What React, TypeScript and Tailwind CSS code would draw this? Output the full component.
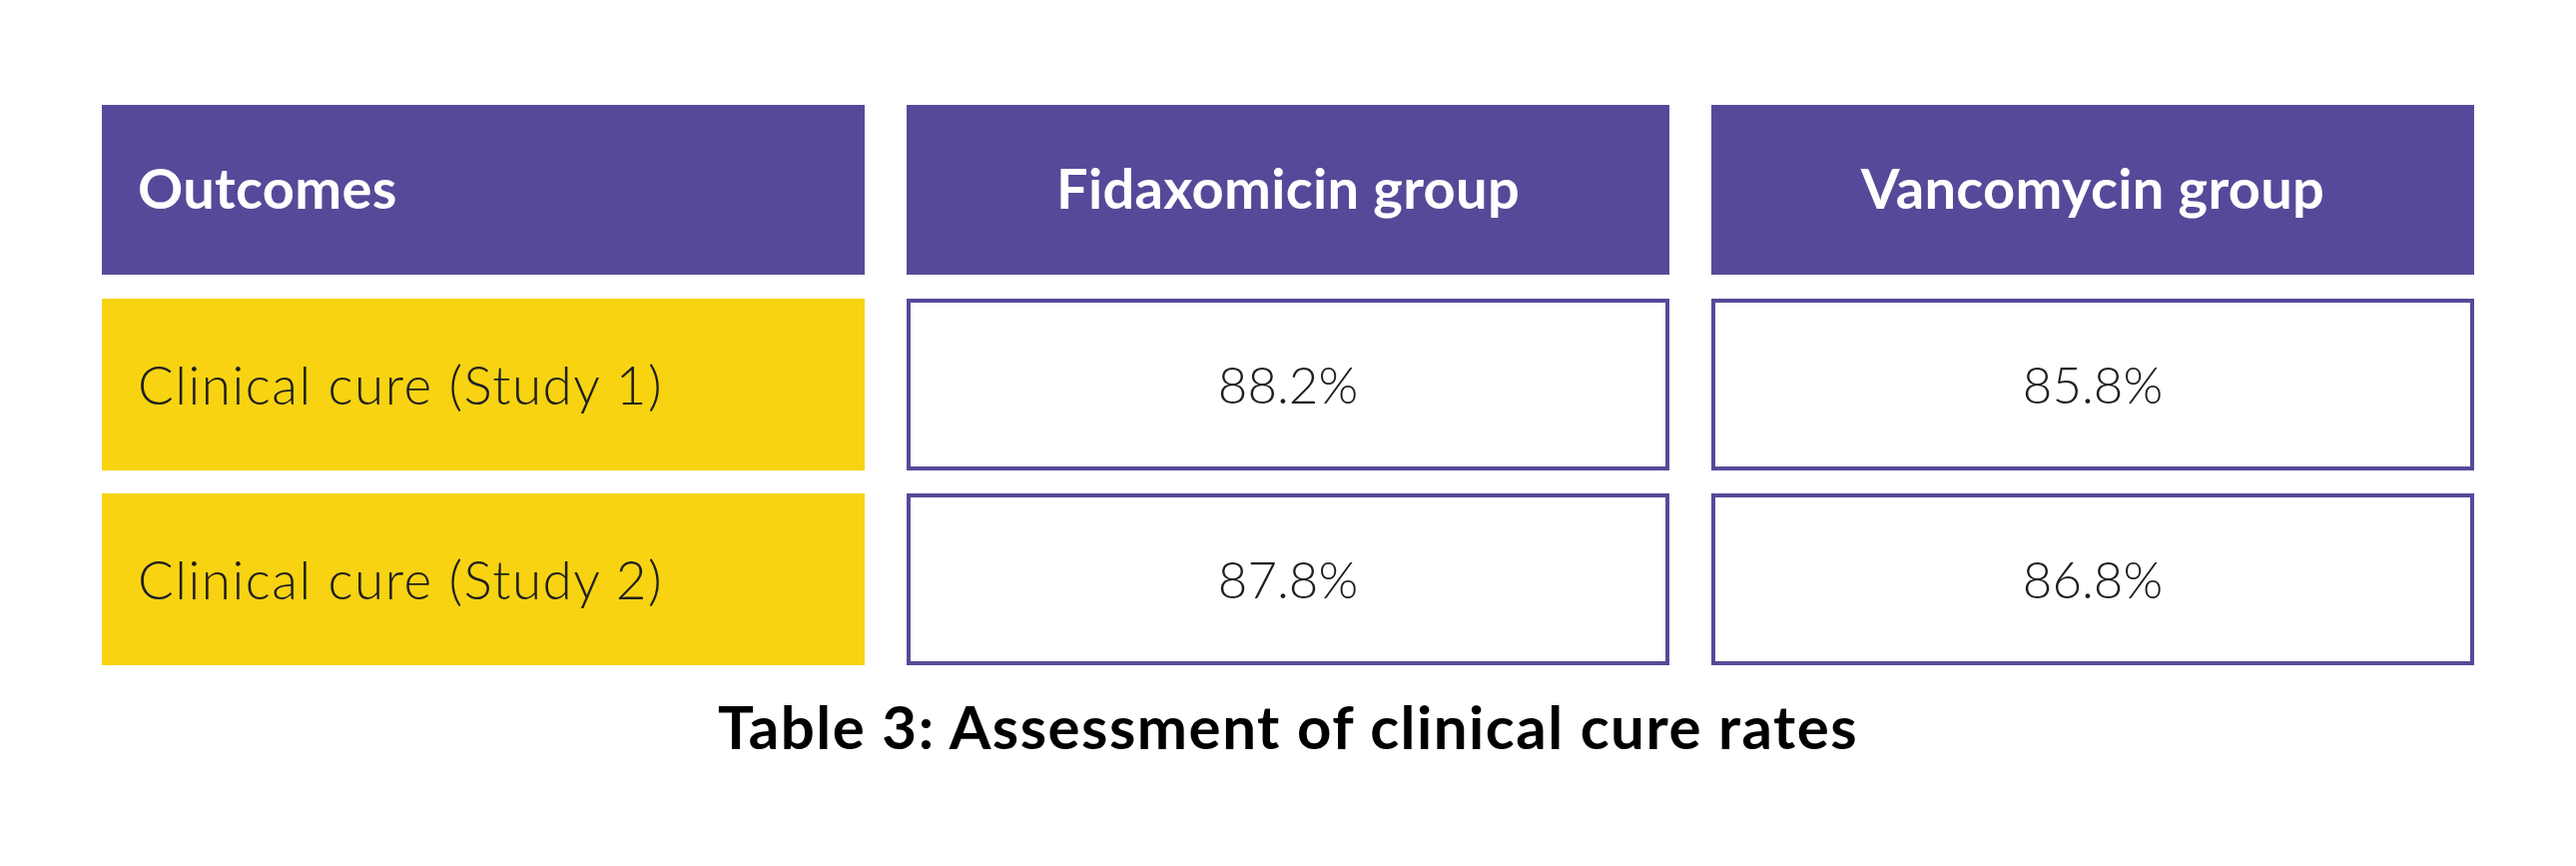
import React from "react";

const rows = [
  { label: "Clinical cure (Study 1)", fidaxomicin: "88.2%", vancomycin: "85.8%" },
  { label: "Clinical cure (Study 2)", fidaxomicin: "87.8%", vancomycin: "86.8%" },
];

export default function App() {
  return (
    <div className="w-[2580px] h-[867px] bg-white font-['Lato',sans-serif] text-[#1e1e1e] flex flex-col items-center pt-[105px]">
      <div className="grid grid-cols-[764px_764px_764px] gap-x-[42px]">
        {/* header */}
        <div className="h-[170px] bg-[#554a99] text-white font-bold text-[56px] flex items-center pl-[36px] pb-[4px] tracking-[0.3px]">
          Outcomes
        </div>
        <div className="h-[170px] bg-[#554a99] text-white font-bold text-[56px] flex items-center justify-center pb-[4px] tracking-[0.3px]">
          Fidaxomicin group
        </div>
        <div className="h-[170px] bg-[#554a99] text-white font-bold text-[56px] flex items-center justify-center pb-[4px] tracking-[0.3px]">
          Vancomycin group
        </div>

        {rows.map((r, i) => (
          <React.Fragment key={r.label}>
            <div
              className={`h-[172px] bg-[#f7d312] flex items-center pl-[36px] text-[53px] font-light tracking-[1.5px] ${
                i === 0 ? "mt-[24px]" : "mt-[23px]"
              }`}
            >
              {r.label}
            </div>
            <div
              className={`h-[172px] border-[4px] border-[#554a99] flex items-center justify-center text-[51px] font-light ${
                i === 0 ? "mt-[24px]" : "mt-[23px]"
              }`}
            >
              {r.fidaxomicin}
            </div>
            <div
              className={`h-[172px] border-[4px] border-[#554a99] flex items-center justify-center text-[51px] font-light ${
                i === 0 ? "mt-[24px]" : "mt-[23px]"
              }`}
            >
              {r.vancomycin}
            </div>
          </React.Fragment>
        ))}
      </div>

      <div className="mt-[28px] text-[60px] font-bold text-black leading-[66px] tracking-[1.5px]">
        Table 3: Assessment of clinical cure rates
      </div>
    </div>
  );
}
